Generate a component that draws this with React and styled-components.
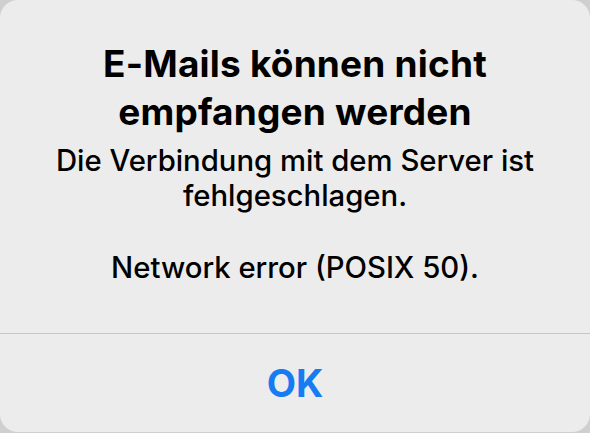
import styled, { createGlobalStyle } from 'styled-components';

const GlobalStyle = createGlobalStyle`
  html, body {
    margin: 0;
    padding: 0;
    background: #cfcfd1;
  }

  body {
    font-family: Inter, "Noto Sans", "Liberation Sans", sans-serif;
    -webkit-font-smoothing: antialiased;
  }
`;

const StyledAlert = styled.div`
  width: 590px;
  height: 432px;
  display: flex;
  flex-direction: column;
  background: #ececec;
  border-radius: 18px;
  overflow: hidden;
  color: #000;
  text-align: center;

  .content {
    flex: 1;
    padding: 39.5px 30px 0;
  }

  .title {
    max-width: 440px;
    margin: 0 auto;
    font-size: 37px;
    font-weight: 700;
    line-height: 48px;
    letter-spacing: 0.2px;
  }

  .message {
    max-width: 510px;
    margin: 8.5px auto 0;
    font-size: 29.3px;
    font-weight: 500;
    line-height: 34.5px;
  }

  .message + .message {
    margin-top: 38px;
  }
`;

const Actions = styled.div`
  height: 98px;
  display: flex;
  border-top: 1.5px solid #c6c6c8;
`;

const ActionButton = styled.button`
  flex: 1;
  border: 0;
  background: transparent;
  font-family: inherit;
  font-size: 38px;
  font-weight: ${(p) => (p.$primary ? 700 : 400)};
  color: #177cf1;
  padding: 0;
  cursor: pointer;
`;

export default function App() {
  return (
    <>
      <GlobalStyle />
      <StyledAlert role='alertdialog'>
        <div className='content'>
          <h1 className='title'>E-Mails können nicht empfangen werden</h1>
          <p className='message'>Die Verbindung mit dem Server ist fehlgeschlagen.</p>
          <p className='message'>Network error (POSIX 50).</p>
        </div>
        <Actions>
          <ActionButton $primary>OK</ActionButton>
        </Actions>
      </StyledAlert>
    </>
  );
}
